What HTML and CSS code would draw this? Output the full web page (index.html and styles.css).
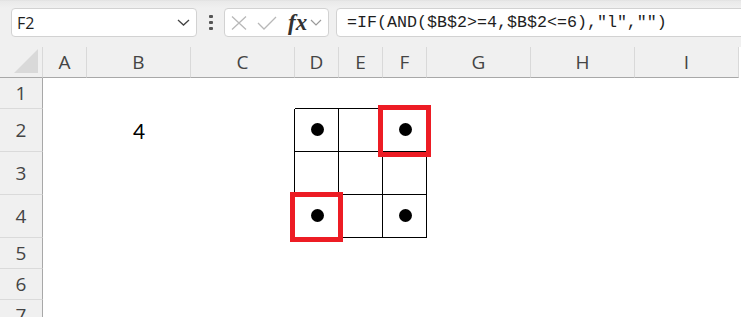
FILE: index.html
```html
<!DOCTYPE html>
<html lang="en">
<head>
<meta charset="utf-8">
<title>Sheet</title>
<link rel="stylesheet" href="styles.css">
</head>
<body>
<div class="toolbar">
  <div class="namebox">
    <span class="ref">F2</span>
    <svg class="chev" width="13" height="7" viewBox="0 0 13 7"><path d="M1 1 L6.5 6 L12 1" fill="none" stroke="#444" stroke-width="1.3"/></svg>
  </div>
  <div class="grip"><span></span><span></span><span></span></div>
  <div class="fxbox">
    <svg class="ico-x" width="16" height="14" viewBox="0 0 16 14"><path d="M1 0.5 L15 13.5 M15 0.5 L1 13.5" fill="none" stroke="#b8b8b8" stroke-width="1.3"/></svg>
    <svg class="ico-ok" width="20" height="14" viewBox="0 0 20 14"><path d="M1 7 L7 13 L19 1" fill="none" stroke="#b8b8b8" stroke-width="1.3"/></svg>
    <span class="fx">fx</span>
    <svg class="chev-s" width="12" height="7" viewBox="0 0 12 7"><path d="M1 1 L6 6 L11 1" fill="none" stroke="#9a9a9a" stroke-width="1.2"/></svg>
  </div>
  <div class="formula">=IF(AND($B$2&gt;=4,$B$2&lt;=6),"l","")</div>
</div>
<div class="sheet">
  <div class="hd corner"><svg width="25" height="25" viewBox="0 0 25 25"><polygon points="0,24 24,24 24,0" fill="#d9d9d9"/></svg></div>
  <div class="hd">A</div><div class="hd">B</div><div class="hd">C</div><div class="hd">D</div><div class="hd">E</div><div class="hd">F</div><div class="hd">G</div><div class="hd">H</div><div class="hd">I</div>

  <div class="rh">1</div>
  <div class="c"></div><div class="c"></div><div class="c"></div><div class="c bt"></div><div class="c bt"></div><div class="c bt"></div><div class="c"></div><div class="c"></div><div class="c"></div>

  <div class="rh">2</div>
  <div class="c"></div><div class="c val">4</div><div class="c bl"></div><div class="c bx"><span class="dot"></span></div><div class="c bx"></div><div class="c bx"><span class="dot"></span></div><div class="c"></div><div class="c"></div><div class="c"></div>

  <div class="rh">3</div>
  <div class="c"></div><div class="c"></div><div class="c bl"></div><div class="c bx"></div><div class="c bx"></div><div class="c bx"></div><div class="c"></div><div class="c"></div><div class="c"></div>

  <div class="rh">4</div>
  <div class="c"></div><div class="c"></div><div class="c bl"></div><div class="c bx"><span class="dot"></span></div><div class="c bx"></div><div class="c bx"><span class="dot"></span></div><div class="c"></div><div class="c"></div><div class="c"></div>

  <div class="rh">5</div>
  <div class="c"></div><div class="c"></div><div class="c"></div><div class="c"></div><div class="c"></div><div class="c"></div><div class="c"></div><div class="c"></div><div class="c"></div>

  <div class="rh">6</div>
  <div class="c"></div><div class="c"></div><div class="c"></div><div class="c"></div><div class="c"></div><div class="c"></div><div class="c"></div><div class="c"></div><div class="c"></div>

  <div class="rh">7</div>
  <div class="c"></div><div class="c"></div><div class="c"></div><div class="c"></div><div class="c"></div><div class="c"></div><div class="c"></div><div class="c"></div><div class="c"></div>

  <div class="mark mark-f2"></div>
  <div class="mark mark-d4"></div>
</div>
</body>
</html>
```

FILE: styles.css
```css
* { box-sizing: border-box; }
html, body { margin: 0; padding: 0; }
body {
  width: 741px;
  height: 317px;
  overflow: hidden;
  background: #fff;
  font-family: "Open Sans", "Noto Sans", sans-serif;
}

.toolbar {
  height: 47px;
  display: flex;
  align-items: flex-start;
  padding-top: 8px;
  background: linear-gradient(#dedede 0, #e9e9e9 1px, #eeeeee 6px, #f0f0f0 8px);
}

.namebox {
  margin-left: 11px;
  width: 186px;
  height: 29px;
  background: #fff;
  border: 1px solid #d2d2d2;
  border-radius: 4px;
  display: flex;
  align-items: center;
  justify-content: space-between;
  padding: 0 6px 0 5px;
}
.ref {
  font-size: 16px;
  color: #1f1f1f;
  line-height: 1;
}
.chev { display: block; }

.grip {
  margin-left: 12px;
  margin-top: 7px;
  width: 4px;
  display: flex;
  flex-direction: column;
  gap: 3px;
}
.grip span {
  display: block;
  width: 4px;
  height: 3px;
  border-radius: 1px;
  background: #555;
}

.fxbox {
  margin-left: 11px;
  width: 105px;
  height: 29px;
  background: #fff;
  border: 1px solid #d2d2d2;
  border-radius: 4px;
  display: flex;
  align-items: center;
}
.ico-x { display: block; margin-left: 6px; }
.ico-ok { display: block; margin-left: 10px; }
.fx {
  margin-left: 11px;
  font-family: "Liberation Serif", serif;
  font-style: italic;
  font-weight: bold;
  font-size: 23px;
  color: #333;
  line-height: 1;
  letter-spacing: 0;
}
.chev-s { display: block; margin-left: 3px; }

.formula {
  margin-left: 7px;
  margin-right: -30px;
  flex: 1;
  height: 29px;
  background: #fff;
  border: 1px solid #d2d2d2;
  border-radius: 4px 0 0 4px;
  padding-left: 10px;
  font-family: "Liberation Mono", monospace;
  font-size: 16.67px;
  line-height: 28px;
  color: #1e1e1e;
  white-space: nowrap;
}

.sheet {
  position: relative;
  display: grid;
  grid-template-columns: 43px 44px 104px 104px 44px 44px 44px 104px 104px 104px;
  grid-template-rows: 31px 31px 43px 43px 43px 31px 31px 31px;
}

.hd {
  background: #f0f0f0;
  border-right: 1px solid #d9d9d9;
  border-bottom: 1px solid #a8a8a8;
  display: flex;
  align-items: center;
  justify-content: center;
  font-size: 19px;
  color: #444;
}
.corner {
  align-items: flex-end;
  justify-content: flex-end;
  padding: 0 3px 3px 0;
}
.corner svg { display: block; }

.rh {
  background: #f0f0f0;
  border-right: 1px solid #a8a8a8;
  border-bottom: 1px solid #dadada;
  display: flex;
  align-items: center;
  justify-content: center;
  font-size: 19px;
  color: #444;
}

.c { background: #fff; }
.bt { border-bottom: 1px solid #000; }
.bl { border-right: 1px solid #000; }
.bx {
  border-right: 1px solid #000;
  border-bottom: 1px solid #000;
  display: flex;
  align-items: center;
  justify-content: center;
}
.val {
  display: flex;
  align-items: center;
  justify-content: center;
  font-family: "Lato", sans-serif;
  font-size: 21px;
  color: #000;
}
.dot {
  display: block;
  width: 13px;
  height: 13px;
  border-radius: 50%;
  background: #000;
  margin: -1px 0 0 1px;
}

.mark {
  position: absolute;
  border: 5px solid #ed1c24;
}
.mark-f2 { left: 378px; top: 58px; width: 53px; height: 52px; }
.mark-d4 { left: 290px; top: 145px; width: 53px; height: 50px; }
```
